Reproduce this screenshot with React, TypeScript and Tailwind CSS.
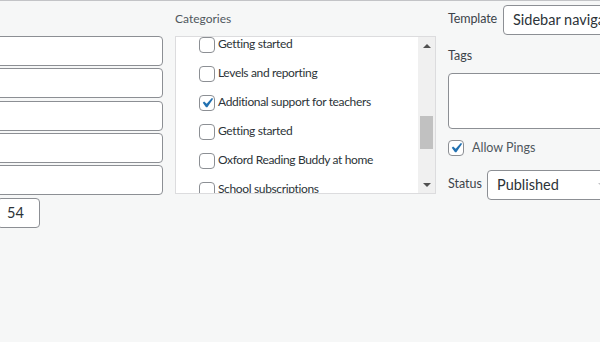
import React from 'react';

const font = { fontFamily: 'Lato, "Open Sans", "Liberation Sans", sans-serif' };

function Check() {
  return (
    <svg viewBox="0 0 20 20" className="w-[20px] h-[20px] -m-[3px] shrink-0">
      <path d="M14.83 4.89l1.34.94-5.81 8.38H9.02L5.78 9.67l1.34-1.25 2.57 2.4z" fill="#2271b1" />
    </svg>
  );
}

function Checkbox({ checked }: { checked?: boolean }) {
  return (
    <span className="w-[16px] h-[16px] shrink-0 flex items-center justify-center rounded-[4px] border border-[#8c8f94] bg-white">
      {checked && <Check />}
    </span>
  );
}

const categories = [
  { name: 'Getting started' },
  { name: 'Levels and reporting' },
  { name: 'Additional support for teachers', checked: true },
  { name: 'Getting started' },
  { name: 'Oxford Reading Buddy at home' },
  { name: 'School subscriptions' },
];

export default function App() {
  return (
    <div className="w-[600px] h-[353px] bg-white overflow-hidden" style={font}>
      <div className="h-[342px] bg-[#f6f7f7] border-t border-[#c3c4c7] overflow-hidden flex text-[#3c434a]">
        {/* left field stack */}
        <div className="-ml-[30px] w-[193px] shrink-0 pt-[35px] flex flex-col">
          <div className="flex flex-col gap-[2.25px]">
            {[0, 1, 2, 3, 4].map((i) => (
              <div key={i} className="h-[30px] bg-white border border-[#8c8f94] rounded-[4px]" />
            ))}
          </div>
          <div className="mt-[3px] ml-[27px] w-[43px] h-[30px] bg-white border border-[#8c8f94] rounded-[4px] pl-[9px] flex items-center text-[14.5px] text-[#2c3338]">
            54
          </div>
        </div>

        {/* categories */}
        <div className="ml-[12px] w-[261px] shrink-0">
          <div className="h-[35px] pt-[8px] leading-[20px] text-[12px] text-[#50575e]">Categories</div>
          <div className="h-[158px] bg-white border border-[#dcdcde] flex">
            <div className="flex-1 pl-[23px] flex flex-col gap-[13px] overflow-hidden">
              {categories.map((c, i) => (
                <label key={i} className="h-[16px] flex items-center gap-[3px] text-[12px] tracking-[-0.35px] leading-[16px] text-[#2c3338] whitespace-nowrap shrink-0">
                  <Checkbox checked={c.checked} />
                  <span className="-mt-[2px]">{c.name}</span>
                </label>
              ))}
            </div>
            <div className="w-[17px] bg-[#f0f0f0] flex flex-col">
              <div className="h-[17px] flex items-center justify-center">
                <span className="w-0 h-0 border-x-[4px] border-x-transparent border-b-[4px] border-b-[#505050]" />
              </div>
              <div className="flex-1">
                <div className="mt-[62px] mx-[2px] h-[33px] bg-[#c1c1c1]" />
              </div>
              <div className="h-[17px] flex items-center justify-center">
                <span className="w-0 h-0 border-x-[4px] border-x-transparent border-t-[4px] border-t-[#505050]" />
              </div>
            </div>
          </div>
        </div>

        {/* right settings */}
        <div className="ml-[12px] flex-1 min-w-0 flex flex-col">
          <div className="mt-[4px] h-[30px] flex items-center">
            <span className="w-[55px] shrink-0 text-[12.5px] tracking-[-0.1px] -mt-[2px]">Template</span>
            <div className="w-[200px] shrink-0 h-[30px] bg-white border border-[#8c8f94] rounded-[4px] pl-[9px] flex items-center text-[14.5px] text-[#2c3338] whitespace-nowrap">
              Sidebar navigation
            </div>
          </div>
          <div className="mt-[11px] h-[20px] leading-[20px] text-[12.5px]">Tags</div>
          <div className="mt-[7px] w-[200px] h-[56px] bg-white border border-[#8c8f94] rounded-[4px]" />
          <div className="mt-[11px] h-[16px] flex items-center gap-[8px] text-[12.5px] text-[#50575e]">
            <Checkbox checked />
            <span>Allow Pings</span>
          </div>
          <div className="mt-[14px] h-[30px] flex items-center">
            <span className="w-[39px] shrink-0 text-[12.5px] -mt-[2px]">Status</span>
            <div className="relative w-[200px] shrink-0 h-[30px] bg-white border border-[#8c8f94] rounded-[4px] pl-[9px] flex items-center text-[14.5px] text-[#2c3338]">
              Published
              <span className="absolute left-[110px] top-[12px] w-0 h-0 border-x-[3px] border-x-transparent border-t-[3px] border-t-[#c3c4c7]" />
            </div>
          </div>
        </div>
      </div>
    </div>
  );
}
